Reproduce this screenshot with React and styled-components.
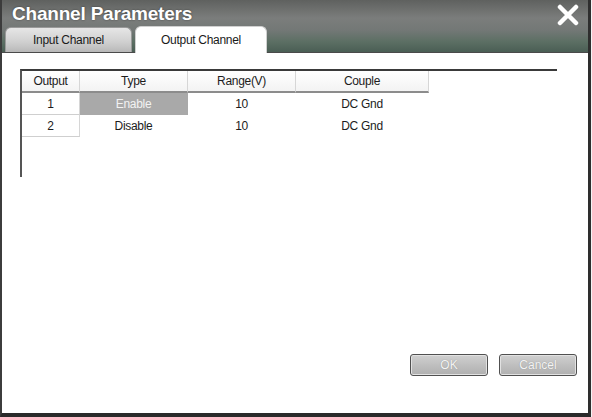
import React from "react"
import styled, { createGlobalStyle } from "styled-components"

const GlobalStyle = createGlobalStyle`
  html, body {
    margin: 0;
    padding: 0;
    background: #f4f4f4;
  }
  body {
    font-family: "Liberation Sans", Arial, sans-serif;
  }
`

const Dialog = styled.div`
  width: 586px;
  height: 413px;
  border-left: 2px solid #3c3c3c;
  border-right: 3px solid #2e2e2e;
  border-bottom: 4px solid #2a2a2a;
  display: flex;
  flex-direction: column;
  background: #ffffff;
`

const Header = styled.div`
  height: 53px;
  display: flex;
  flex-direction: column;
  background: linear-gradient(
    to bottom,
    #5f615f 0%,
    #7b7d7c 35%,
    #737876 58%,
    #5c6f64 80%,
    #4a5e54 100%
  );
  border-bottom: 1px solid #4a4a4a;
  box-sizing: border-box;
`

const TitleRow = styled.div`
  height: 26px;
  display: flex;
  align-items: center;
  justify-content: space-between;
  padding: 0 8px 0 10px;
`

const Title = styled.div`
  color: #ffffff;
  font-family: "Liberation Sans", Arial, sans-serif;
  font-weight: bold;
  font-size: 19px;
  letter-spacing: -0.2px;
  text-shadow: 0 0 2px rgba(0, 0, 0, 0.5);
  margin-top: 2px;
`

const CloseButton = styled.div`
  width: 24px;
  height: 24px;
  display: flex;
  align-items: center;
  justify-content: center;
  margin-top: 4px;
`

const TabRow = styled.div`
  flex: 1;
  display: flex;
  align-items: flex-end;
  gap: 3px;
  padding-left: 3px;
`

const Tab = styled.div`
  width: ${({ width }) => width}px;
  height: ${({ active }) => (active ? 27 : 25)}px;
  border-radius: 6px 6px 0 0;
  display: flex;
  align-items: center;
  justify-content: center;
  font-size: 12px;
  letter-spacing: -0.3px;
  color: #1a1a1a;
  box-sizing: border-box;
  background: ${({ active }) =>
    active
      ? "#ffffff"
      : "linear-gradient(to bottom, #e6e6e6 0%, #cfcfcf 60%, #b8b8b8 100%)"};
  border: 1px solid ${({ active }) => (active ? "#d0d0d0" : "#9a9a9a")};
  border-bottom: none;
  margin-bottom: ${({ active }) => (active ? -1 : 0)}px;
`

const Content = styled.div`
  flex: 1;
  display: flex;
  flex-direction: column;
  padding: 16px 0 37px 18px;
`

const TableFrame = styled.div`
  width: 537px;
  height: 108px;
  border-top: 2px solid #3a3a3a;
  border-left: 2px solid #555555;
  box-sizing: border-box;
`

const Grid = styled.div`
  display: grid;
  grid-template-columns: 58px 108px 108px 133px;
`

const HeadCell = styled.div`
  height: 22px;
  display: flex;
  align-items: center;
  justify-content: center;
  font-size: 12px;
  letter-spacing: -0.3px;
  color: #1c1c1c;
  background: linear-gradient(to bottom, #ffffff 0%, #f3f3f3 100%);
  border-right: 1px solid #d6d6d6;
  border-bottom: 2px solid #8c8c8c;
  box-sizing: border-box;
`

const Cell = styled.div`
  height: 22px;
  display: flex;
  align-items: center;
  justify-content: center;
  font-size: 12px;
  letter-spacing: -0.3px;
  color: ${({ selected }) => (selected ? "#f2f2f2" : "#1c1c1c")};
  background: ${({ selected }) => (selected ? "#a9a9a9" : "transparent")};
  border-right: 1px solid ${({ index }) => (index ? "#d6d6d6" : "transparent")};
  border-bottom: 1px solid ${({ index }) => (index ? "#cfcfcf" : "transparent")};
  box-sizing: border-box;
`

const Spacer = styled.div`
  flex: 1;
`

const ButtonRow = styled.div`
  display: flex;
  justify-content: flex-end;
  gap: 11px;
  padding-right: 11px;
`

const Button = styled.div`
  width: 78px;
  height: 22px;
  border: 1px solid #505050;
  border-radius: 3px;
  box-sizing: border-box;
  display: flex;
  align-items: center;
  justify-content: center;
  font-size: 12px;
  color: #f4f4f4;
  background: linear-gradient(to bottom, #d0d0d0 0%, #bfbfbf 50%, #b0b0b0 100%);
  box-shadow: inset 0 0 0 1px #e2e2e2;
  text-shadow: 0 0 1px #888;
`

const columns = ["Output", "Type", "Range(V)", "Couple"]

const rows = [
  { id: "1", type: "Enable", range: "10", couple: "DC Gnd", selected: true },
  { id: "2", type: "Disable", range: "10", couple: "DC Gnd" },
]

const CloseIcon = () => (
  <svg width="22" height="22" viewBox="0 0 22 22">
    <path
      d="M3 3 L19 19 M19 3 L3 19"
      stroke="#ffffff"
      strokeWidth="4.5"
      strokeLinecap="round"
    />
  </svg>
)

const App = () => {
  return (
    <>
      <GlobalStyle />
      <Dialog>
        <Header>
          <TitleRow>
            <Title>Channel Parameters</Title>
            <CloseButton>
              <CloseIcon />
            </CloseButton>
          </TitleRow>
          <TabRow>
            <Tab width={127}>Input Channel</Tab>
            <Tab width={132} active>
              Output Channel
            </Tab>
          </TabRow>
        </Header>
        <Content>
          <TableFrame>
            <Grid>
              {columns.map((c) => (
                <HeadCell key={c}>{c}</HeadCell>
              ))}
              {rows.map((r) => (
                <React.Fragment key={r.id}>
                  <Cell index>{r.id}</Cell>
                  <Cell selected={r.selected}>{r.type}</Cell>
                  <Cell>{r.range}</Cell>
                  <Cell>{r.couple}</Cell>
                </React.Fragment>
              ))}
            </Grid>
          </TableFrame>
          <Spacer />
          <ButtonRow>
            <Button>OK</Button>
            <Button>Cancel</Button>
          </ButtonRow>
        </Content>
      </Dialog>
    </>
  )
}

export default App
